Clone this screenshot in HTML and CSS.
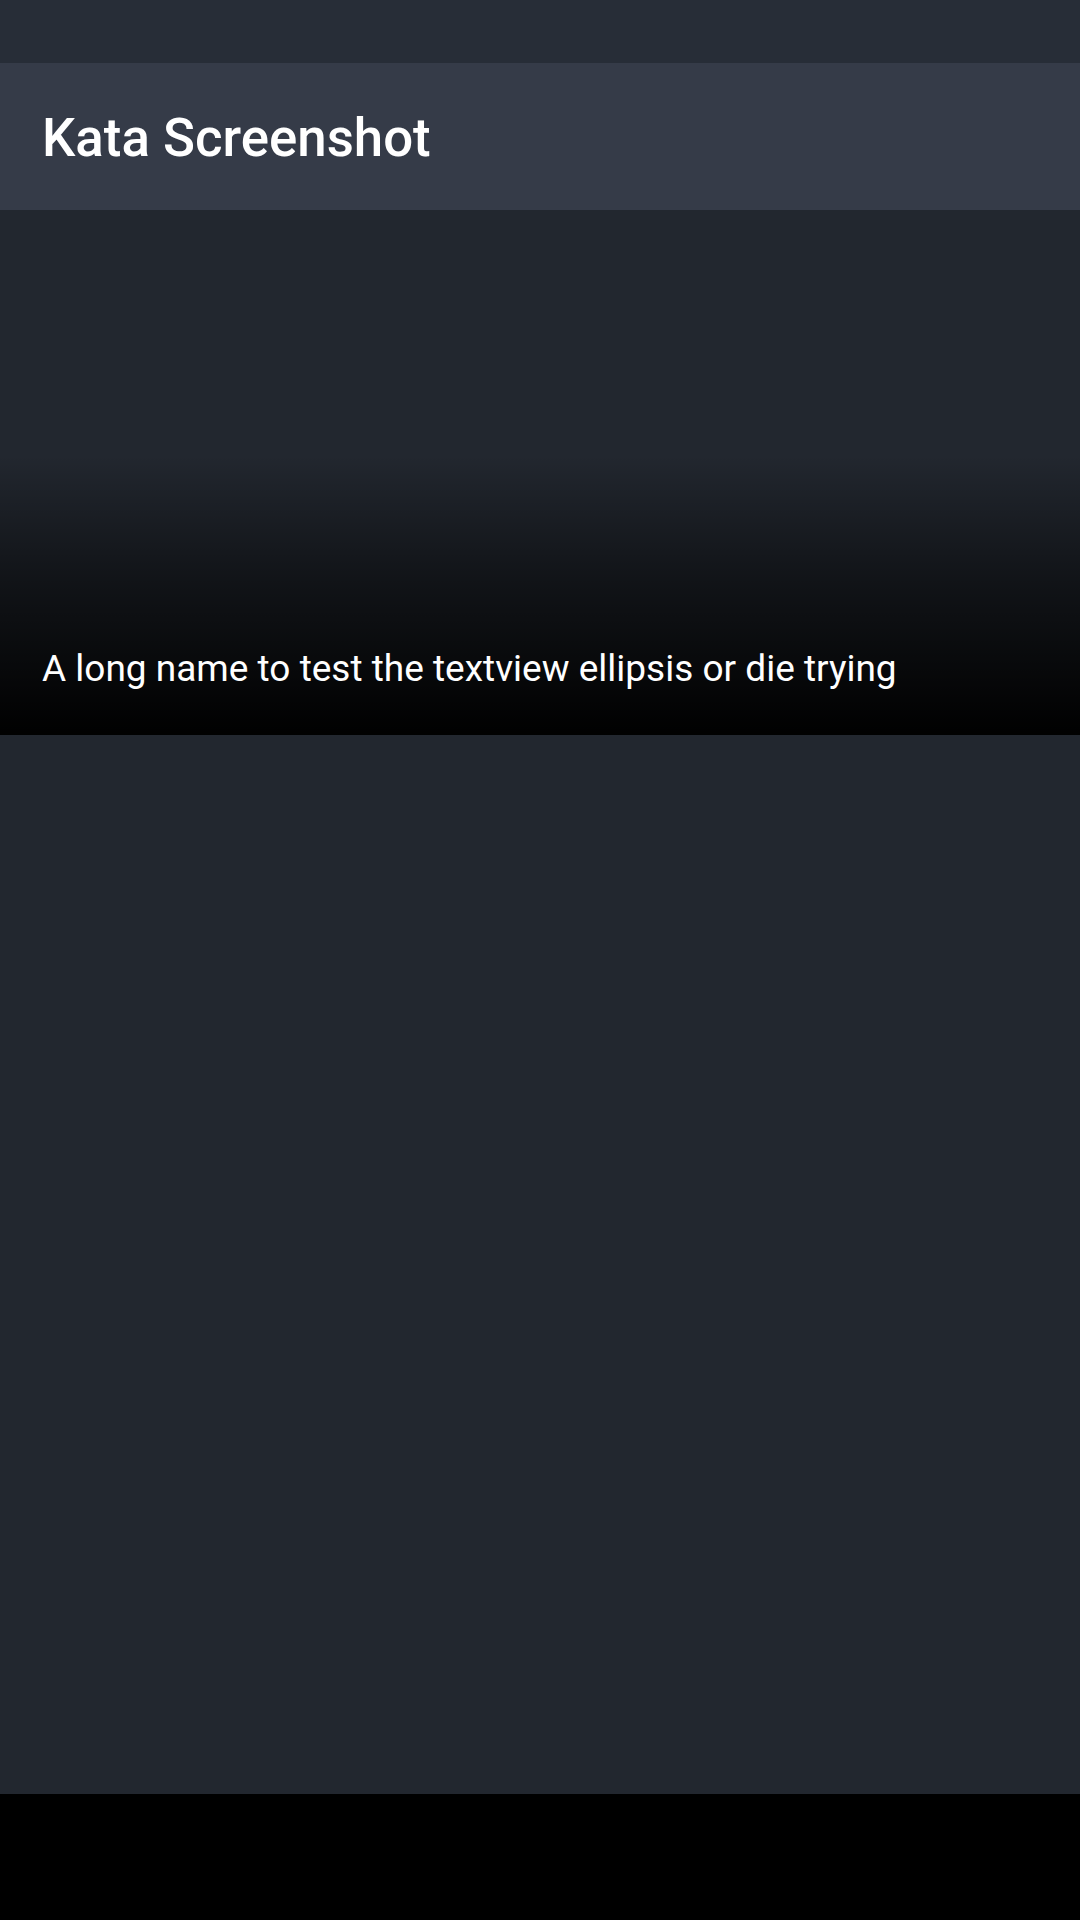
FILE: index.html
```html
<!DOCTYPE html>
<html>
<head>
<meta charset="utf-8">
<link rel="stylesheet" href="styles.css">
</head>
<body>
<div class="screen">
  <div class="status-bar"></div>
  <div class="toolbar"><span class="title">Kata Screenshot</span></div>
  <main class="content">
    <div class="card">
      <div class="card-shade">
        <span class="card-name">A long name to test the textview ellipsis or die trying</span>
      </div>
    </div>
  </main>
  <div class="nav-bar"></div>
</div>
</body>
</html>
```

FILE: styles.css
```css
html, body {
  margin: 0;
  padding: 0;
  background: #000;
}
.screen {
  width: 1080px;
  height: 1920px;
  display: flex;
  flex-direction: column;
  font-family: Roboto, "Noto Sans", sans-serif;
  color: #fff;
}
.status-bar {
  height: 63px;
  background: #272d37;
}
.toolbar {
  height: 147px;
  background: #353b48;
  display: flex;
  align-items: center;
  padding-left: 42px;
}
.title {
  font-size: 52.8px;
  font-weight: 500;
  color: #fff;
  white-space: nowrap;
  padding-top: 2px;
}
.content {
  flex: 1;
  background: #22272f;
  display: flex;
  flex-direction: column;
}
.card {
  height: 525px;
  display: flex;
  flex-direction: column;
  justify-content: flex-end;
}
.card-shade {
  height: 280px;
  background: linear-gradient(to bottom, rgba(0,0,0,0) 0%, rgba(0,0,0,0.5) 45%, rgba(0,0,0,0.99) 100%);
  display: flex;
  align-items: flex-end;
  padding: 0 42px 44px 42px;
  box-sizing: border-box;
}
.card-name {
  font-size: 37px;
  line-height: 44px;
  white-space: nowrap;
  overflow: hidden;
  text-overflow: ellipsis;
}
.nav-bar {
  height: 126px;
  background: #000;
}
```
